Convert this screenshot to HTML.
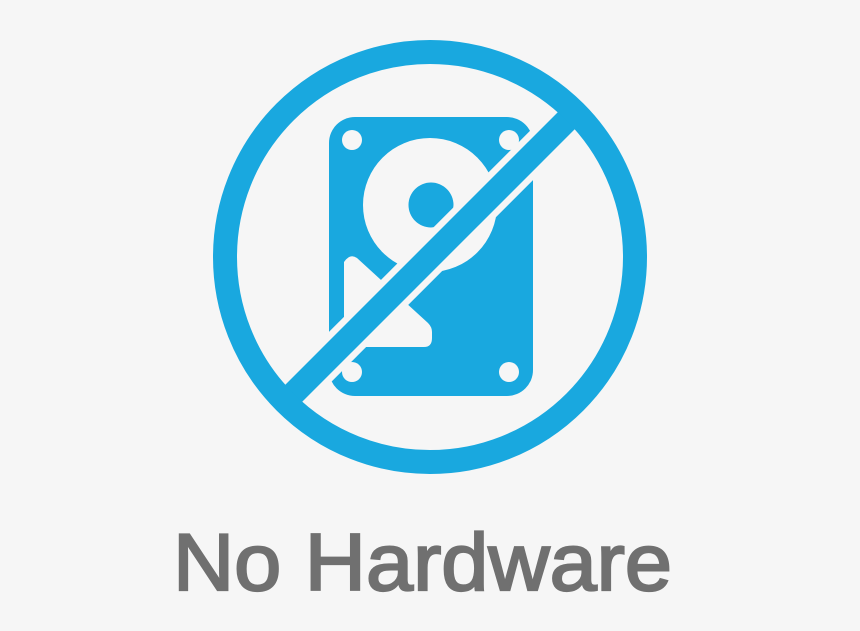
<!DOCTYPE html>
<html><head><style>html,body{margin:0;padding:0;background:#f6f6f6;width:860px;height:631px;overflow:hidden}</style></head>
<body>
<svg width="860" height="631" viewBox="0 0 860 631" xmlns="http://www.w3.org/2000/svg">
<rect width="860" height="631" fill="#f6f6f6"/>
<defs><clipPath id="c"><circle cx="430" cy="257" r="200"/></clipPath></defs>
<rect x="329" y="117" width="204" height="279" rx="26" fill="#19a8df"/>
<circle cx="352" cy="140" r="10" fill="#f6f6f6"/>
<circle cx="509" cy="140" r="10" fill="#f6f6f6"/>
<circle cx="352" cy="372" r="10" fill="#f6f6f6"/>
<circle cx="509" cy="372" r="10" fill="#f6f6f6"/>
<circle cx="430" cy="205" r="67" fill="#f6f6f6"/>
<circle cx="431" cy="205" r="22.5" fill="#19a8df"/>
<path d="M357 258 Q350 253 344 262 L344 340 Q344 347 351 347 L424 347 Q432 347 432 338 L432 332 Q432 327 428 323 Z" fill="#f6f6f6"/>
<g clip-path="url(#c)">
<line x1="600" y1="87" x2="260" y2="427" stroke="#f6f6f6" stroke-width="37"/>
<line x1="600" y1="87" x2="260" y2="427" stroke="#19a8df" stroke-width="24"/>
</g>
<circle cx="430" cy="257" r="205" fill="none" stroke="#19a8df" stroke-width="24"/>
<text x="173" y="590" font-family="Liberation Sans, sans-serif" font-size="81" fill="#707070" stroke="#707070" stroke-width="2.2" textLength="499" lengthAdjust="spacingAndGlyphs">No Hardware</text>
</svg>
</body></html>
